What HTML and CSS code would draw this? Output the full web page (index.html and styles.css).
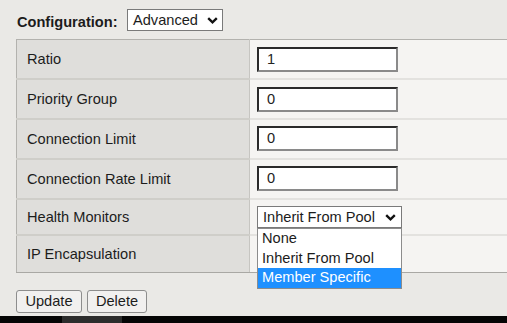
FILE: index.html
```html
<!DOCTYPE html>
<html>
<head>
<meta charset="utf-8">
<link rel="stylesheet" href="styles.css">
</head>
<body>
<div class="page">
  <div class="config">
    <span class="config-label">Configuration:</span>
    <div class="select select-config">
      <span>Advanced</span>
      <svg class="chev" width="11" height="7" viewBox="0 0 11 7"><path d="M1.2 1.2 L5.5 5.3 L9.8 1.2" fill="none" stroke="#111" stroke-width="2.4"/></svg>
    </div>
  </div>
  <table class="props">
    <tr class="row-tall"><td class="lbl">Ratio</td><td class="val"><div class="input">1</div></td></tr>
    <tr class="row-tall"><td class="lbl">Priority Group</td><td class="val"><div class="input">0</div></td></tr>
    <tr class="row-tall"><td class="lbl">Connection Limit</td><td class="val"><div class="input">0</div></td></tr>
    <tr class="row-tall"><td class="lbl">Connection Rate Limit</td><td class="val"><div class="input">0</div></td></tr>
    <tr class="row-short"><td class="lbl">Health Monitors</td><td class="val">
      <div class="dd">
        <div class="select select-hm">
          <span>Inherit From Pool</span>
          <svg class="chev" width="11" height="7" viewBox="0 0 11 7"><path d="M1.2 1.2 L5.5 5.3 L9.8 1.2" fill="none" stroke="#111" stroke-width="2.4"/></svg>
        </div>
        <ul class="dd-list">
          <li class="opt">None</li>
          <li class="opt">Inherit From Pool</li>
          <li class="opt opt-sel">Member Specific</li>
        </ul>
      </div>
    </td></tr>
    <tr class="row-short"><td class="lbl">IP Encapsulation</td><td class="val"></td></tr>
  </table>
  <div class="actions">
    <button class="btn btn-update">Update</button>
    <button class="btn btn-delete">Delete</button>
  </div>
</div>
<div class="taskbar"><div class="task-item"></div></div>
</body>
</html>
```

FILE: styles.css
```css
html, body {
  margin: 0;
  padding: 0;
}
body {
  width: 507px;
  height: 323px;
  overflow: hidden;
  background: #eae9e6;
  font-family: "Liberation Sans", Arial, sans-serif;
  color: #1c1c1c;
  font-size: 14.6px;
  display: flex;
  flex-direction: column;
}
.page {
  padding: 9px 0 0 16px;
  flex: 1;
}
.config {
  display: flex;
  align-items: center;
  height: 22px;
}
.config-label {
  font-weight: bold;
  font-size: 14.6px;
  padding-left: 1px;
  width: 110px;
  position: relative;
  top: 2px;
}
.select {
  box-sizing: border-box;
  background: #fff;
  border: 1px solid #7a7a7a;
  display: flex;
  align-items: center;
  justify-content: space-between;
  font-size: 14.6px;
  color: #1c1c1c;
}
.select-config {
  width: 96px;
  height: 22px;
  padding: 0 4px 0 5px;
}
.select-hm {
  width: 145px;
  height: 22px;
  padding: 0 5px 0 5px;
}
.chev { display: block; }
.props {
  margin-top: 8px;
  border-collapse: collapse;
  width: 495px;
  border-top: 1px solid #b3b2ae;
  border-left: 1px solid #b3b2ae;
  border-bottom: 1px solid #a9a8a4;
}
.props td {
  padding: 0;
}
.lbl {
  width: 222px;
  background: #dfdedb;
  padding-left: 10px !important;
  border-right: 1px solid #c6c5c1;
  border-bottom: 2px solid #cfcec9;
}
.val {
  background: #f5f4f2;
  padding-left: 7px !important;
  border-bottom: 2px solid #e3e2df;
}
.row-tall { height: 39.8px; }
.row-short { height: 36.8px; }
.props tr:last-child td { border-bottom: 1px solid #a9a8a4; }
.input {
  box-sizing: border-box;
  width: 141px;
  height: 25px;
  background: #fff;
  border: 2px solid;
  border-color: #2a2a2a #8a8a8a #8a8a8a #2a2a2a;
  padding-left: 8px;
  line-height: 21px;
  color: #222;
}
.dd {
  position: relative;
  width: 145px;
}
.dd-list {
  position: absolute;
  top: 22px;
  left: 0;
  width: 145px;
  box-sizing: border-box;
  margin: 0;
  padding: 0;
  list-style: none;
  background: #fff;
  border: 1px solid #8c8c8c;
  z-index: 2;
}
.opt {
  height: 19.6px;
  line-height: 19.6px;
  padding-left: 4px;
  font-size: 14.6px;
  color: #1c1c1c;
}
.opt-sel {
  background: #1e90ff;
  color: #fff;
}
.actions {
  display: flex;
  gap: 5px;
  margin-top: 17px;
}
.btn {
  box-sizing: border-box;
  height: 23px;
  padding: 0;
  font-family: "Liberation Sans", Arial, sans-serif;
  font-size: 14.6px;
  color: #1c1c1c;
  background: #f1f0ef;
  border: 1px solid #8d8d8d;
  border-radius: 3px;
}
.btn-update { width: 66px; }
.btn-delete { width: 60px; }
.taskbar {
  height: 7px;
  background: #050505;
  display: flex;
}
.task-item {
  margin-left: 62px;
  width: 60px;
  background: #2c2c2c;
}
```
